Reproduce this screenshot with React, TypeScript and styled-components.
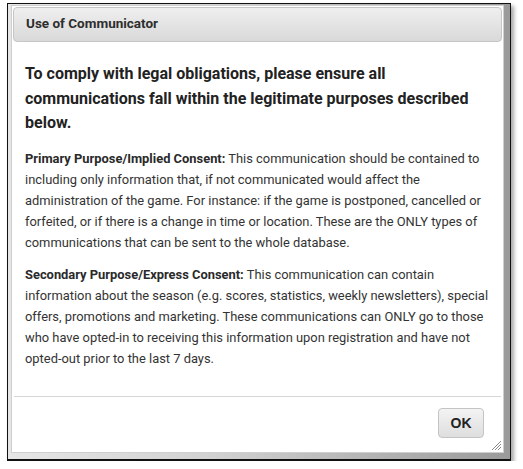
import * as React from "react";
import styled, { createGlobalStyle } from "styled-components";

const GlobalStyle = createGlobalStyle`
  html, body {
    margin: 0;
    padding: 0;
    background: #fff;
  }
  * {
    box-sizing: border-box;
  }
`;

const Frame = styled.div`
  margin: 3px 0 0 7px;
  width: 504px;
  height: 458px;
  border: 1px solid #111;
  border-bottom-width: 2px;
  box-shadow: 3px 3px 4px rgba(0, 0, 0, 0.35);
  padding: 1px 6px 6px 3px;
  display: flex;
  background: linear-gradient(90deg, #e6e6e6 0, #d2d2d2 40%, #9a9a9a 100%);
`;

const Dialog = styled.div`
  position: relative;
  flex: 1;
  display: flex;
  flex-direction: column;
  background: #fff;
  border: 1px solid #cfcfcf;
  padding: 1px;
  font-family: Roboto, "Liberation Sans", sans-serif;
`;

const TitleBar = styled.div`
  height: 35px;
  display: flex;
  align-items: center;
  padding: 0 0 3px 12px;
  border: 1px solid #c6c6c6;
  border-radius: 4px;
  background: linear-gradient(#efefef, #d9d9d9);
`;

const Title = styled.span`
  font-size: 13.5px;
  font-weight: 700;
  color: #2e2e2e;
`;

const Content = styled.div`
  flex: 1;
  padding: 20px 10px 0 12px;
  color: #333;
`;

const Heading = styled.h2`
  margin: 0 0 12px;
  font-size: 16px;
  line-height: 24.5px;
  font-weight: 700;
  color: #222;
`;

const Para = styled.p`
  margin: 0 0 11px;
  font-size: 12.9px;
  line-height: 21px;
`;

const Lead = styled.strong`
  font-weight: 700;
  color: #2a2a2a;
`;

const ButtonPane = styled.div`
  margin: 0 1px;
  border-top: 1px solid #d6d6d6;
  padding: 11px 17px 13px 0;
  display: flex;
  justify-content: flex-end;
`;

const OkButton = styled.button`
  width: 46px;
  height: 30px;
  border: 1px solid #c4c4c4;
  border-radius: 4px;
  background: linear-gradient(#f3f3f3, #dedede);
  font-family: "Liberation Sans", Arial, sans-serif;
  font-size: 14px;
  font-weight: 700;
  color: #222;
  padding: 0;
`;

const Grip = styled.svg`
  position: absolute;
  right: 2px;
  bottom: 2px;
`;

export default function App() {
  return (
    <>
      <GlobalStyle />
      <Frame>
        <Dialog>
          <TitleBar>
            <Title>Use of Communicator</Title>
          </TitleBar>
          <Content>
            <Heading>
              To comply with legal obligations, please ensure all
              communications fall within the legitimate purposes described
              below.
            </Heading>
            <Para>
              <Lead>Primary Purpose/Implied Consent:</Lead> This communication
              should be contained to including only information that, if not
              communicated would affect the administration of the game. For
              instance: if the game is postponed, cancelled or forfeited, or
              if there is a change in time or location. These are the ONLY
              types of communications that can be sent to the whole database.
            </Para>
            <Para>
              <Lead>Secondary Purpose/Express Consent:</Lead> This
              communication can contain information about the season (e.g.
              scores, statistics, weekly newsletters), special offers,
              promotions and marketing. These communications can ONLY go to
              those who have opted-in to receiving this information upon
              registration and have not opted-out prior to the last 7 days.
            </Para>
          </Content>
          <ButtonPane>
            <OkButton>OK</OkButton>
          </ButtonPane>
          <Grip width="10" height="10" viewBox="0 0 10 10">
            <g stroke="#8a8a8a" strokeWidth="1">
              <line x1="1" y1="10" x2="10" y2="1" />
              <line x1="4" y1="10" x2="10" y2="4" />
              <line x1="7" y1="10" x2="10" y2="7" />
            </g>
          </Grip>
        </Dialog>
      </Frame>
    </>
  );
}
